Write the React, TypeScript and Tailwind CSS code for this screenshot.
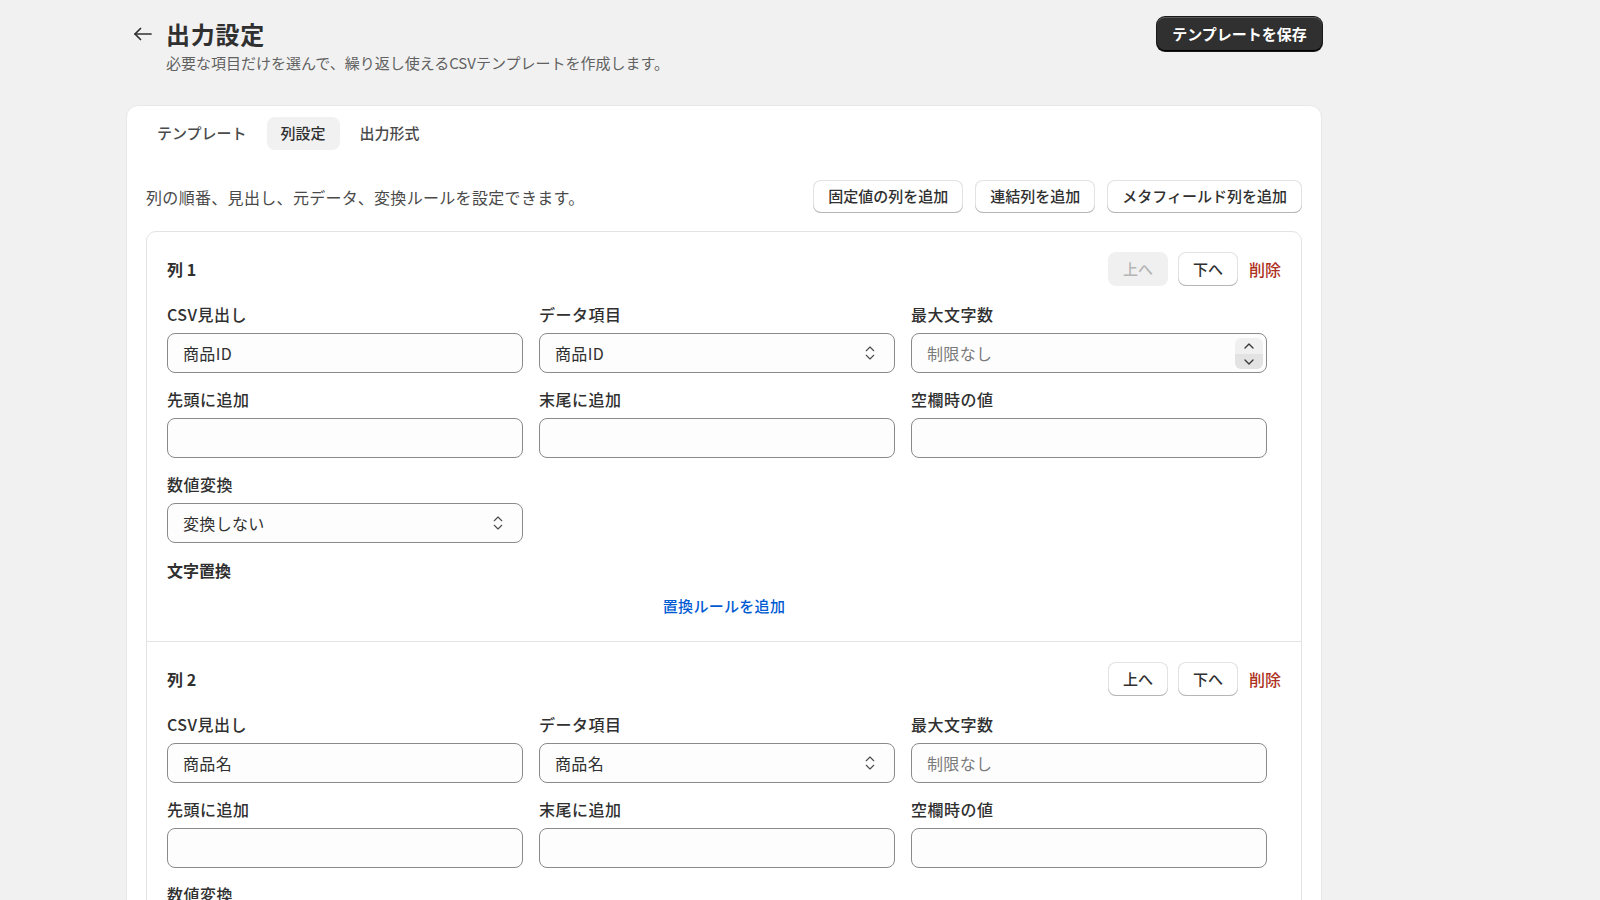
import React from "react";
import { ChevronsUpDown, ChevronUp, ChevronDown } from "lucide-react";

interface ColumnDef {
    id: number;
    header: string;
    source: string;
    showSpinner?: boolean;
}

const columns: ColumnDef[] = [
    { id: 1, header: "商品ID", source: "商品ID", showSpinner: true },
    { id: 2, header: "商品名", source: "商品名" },
];

const font = "font-['Noto_Sans_CJK_JP','Noto_Sans',sans-serif]";

const secondaryBtn =
    "h-[33px] px-[15px] rounded-lg bg-white text-[15px] font-medium text-[#303030] shadow-[inset_0_-1px_0_#b5b5b5,inset_0_0_0_1px_#e3e3e3] flex items-center";

const inputBox =
    "h-10 w-full rounded-lg border border-[#8a8a8a] bg-[#fdfdfd] px-[15px] text-[16px] tracking-[0.02em] text-[#303030] flex items-center";

const Field: React.FC<{ label: string; children?: React.ReactNode }> = ({ label, children }) => (
    <div className="flex flex-col">
        <label className="text-[16px] leading-5 tracking-[0.03em] font-medium text-[#303030] mb-[9px]">{label}</label>
        {children}
    </div>
);

const SelectBox: React.FC<{ value: string }> = ({ value }) => (
    <div className={`${inputBox} justify-between pr-[15px]`}>
        <span>{value}</span>
        <ChevronsUpDown size={18} strokeWidth={1.5} className="text-[#4a4a4a]" />
    </div>
);

const ColumnCard: React.FC<{ col: ColumnDef; first: boolean }> = ({ col, first }) => (
    <div className={`px-5 pt-5 pb-[21px] ${first ? "" : "border-t border-[#e3e3e3]"}`}>
        <div className="flex items-center justify-between h-[34px]">
            <h3 className="text-[16px] font-bold text-[#303030]">列 {col.id}</h3>
            <div className="flex items-center gap-[10px]">
                {first ? (
                    <button className="h-[34px] w-[60px] rounded-lg bg-[#f0f0f0] text-[15px] font-medium text-[#b5b5b5]">
                        上へ
                    </button>
                ) : (
                    <button className={`${secondaryBtn} h-[34px] w-[60px] justify-center px-0`}>上へ</button>
                )}
                <button className={`${secondaryBtn} h-[34px] w-[60px] justify-center px-0`}>下へ</button>
                <button className="text-[16px] font-medium text-[#ad3120] ml-[1px]">削除</button>
            </div>
        </div>

        <div className="mt-[18px] grid w-[1100px] grid-cols-3 gap-x-4 gap-y-4">
            <Field label="CSV見出し">
                <div className={inputBox}>{col.header}</div>
            </Field>
            <Field label="データ項目">
                <SelectBox value={col.source} />
            </Field>
            <Field label="最大文字数">
                <div className={`${inputBox} justify-between pr-[3px]`}>
                    <span className="text-[#7a7a7a]">制限なし</span>
                    {col.showSpinner && (
                        <div className="flex h-[31px] w-[28px] flex-col overflow-hidden rounded-[6px] text-[#3a3a3a]">
                            <div className="flex flex-1 items-center justify-center bg-[#f0f0f0]">
                                <ChevronUp size={16} strokeWidth={2} />
                            </div>
                            <div className="flex flex-1 items-center justify-center bg-[#e3e3e3]">
                                <ChevronDown size={16} strokeWidth={2} />
                            </div>
                        </div>
                    )}
                </div>
            </Field>
            <Field label="先頭に追加">
                <div className={inputBox} />
            </Field>
            <Field label="末尾に追加">
                <div className={inputBox} />
            </Field>
            <Field label="空欄時の値">
                <div className={inputBox} />
            </Field>
            <Field label="数値変換">
                <SelectBox value="変換しない" />
            </Field>
        </div>

        <div className="mt-[17px]">
            <h4 className="text-[16px] leading-5 font-bold text-[#303030]">文字置換</h4>
            <div className="mt-[11px] flex justify-center py-1">
                <button className="text-[15px] leading-[21px] tracking-[0.02em] font-medium text-[#005bd3]">置換ルールを追加</button>
            </div>
        </div>
    </div>
);

const App: React.FC = () => {
    const tabs = ["テンプレート", "列設定", "出力形式"];
    const selectedTab = "列設定";

    return (
        <div className={`min-h-screen bg-[#f1f1f1] ${font} text-[#303030]`}>
            <div className="ml-[126px] w-[1196px] pt-[17px] pb-10">
                {/* header */}
                <div className="flex items-start justify-between">
                    <div className="flex items-start gap-[13px] pl-[7px] pt-[1px]">
                        <button className="flex h-8 w-5 items-center text-[#303030]">
                            <svg width="20" height="20" viewBox="0 0 20 20" fill="none" stroke="currentColor" strokeWidth="1.7" strokeLinecap="round" strokeLinejoin="round">
                                <path d="M18 10H2" />
                                <path d="M7.5 4.5 2 10l5.5 5.5" />
                            </svg>
                        </button>
                        <div>
                            <h1 className="text-[24px] leading-8 tracking-[0.03em] font-bold">出力設定</h1>
                            <p className="mt-[2px] text-[15px] leading-[22px] text-[#616161]">
                                必要な項目だけを選んで、繰り返し使えるCSVテンプレートを作成します。
                            </p>
                        </div>
                    </div>
                    <button className="h-[34px] w-[165px] rounded-lg bg-[#303030] text-[15px] font-bold text-white shadow-[inset_0_-1px_0_#000,inset_0_1px_0_rgba(255,255,255,0.2),0_0_0_1px_#1a1a1a]">
                        テンプレートを保存
                    </button>
                </div>

                {/* card */}
                <div className="mt-[31px] rounded-xl border border-[#e8e8e8] bg-white pt-[11px] pb-5 shadow-[0_1px_0_rgba(26,26,26,0.07)]">
                    <div className="flex gap-1.5 px-4">
                        {tabs.map((tab) => (
                            <button
                                key={tab}
                                className={`h-[33px] rounded-lg px-[14px] text-[15px] font-medium ${
                                    selectedTab === tab ? "bg-[#f1f1f1] text-[#303030]" : "text-[#4a4a4a]"
                                }`}
                            >
                                {tab}
                            </button>
                        ))}
                    </div>

                    <div className="px-[19px]">
                        <div className="mt-[30px] flex items-center justify-between">
                            <p className="text-[16px] tracking-[0.02em] text-[#4a4a4a]">列の順番、見出し、元データ、変換ルールを設定できます。</p>
                            <div className="flex gap-3">
                                <button className={secondaryBtn}>固定値の列を追加</button>
                                <button className={secondaryBtn}>連結列を追加</button>
                                <button className={secondaryBtn}>メタフィールド列を追加</button>
                            </div>
                        </div>

                        <div className="mt-[18px] rounded-[10px] border border-[#e3e3e3]">
                            {columns.map((col, index) => (
                                <ColumnCard key={col.id} col={col} first={index === 0} />
                            ))}
                        </div>
                    </div>
                </div>
            </div>
        </div>
    );
};

export default App;
